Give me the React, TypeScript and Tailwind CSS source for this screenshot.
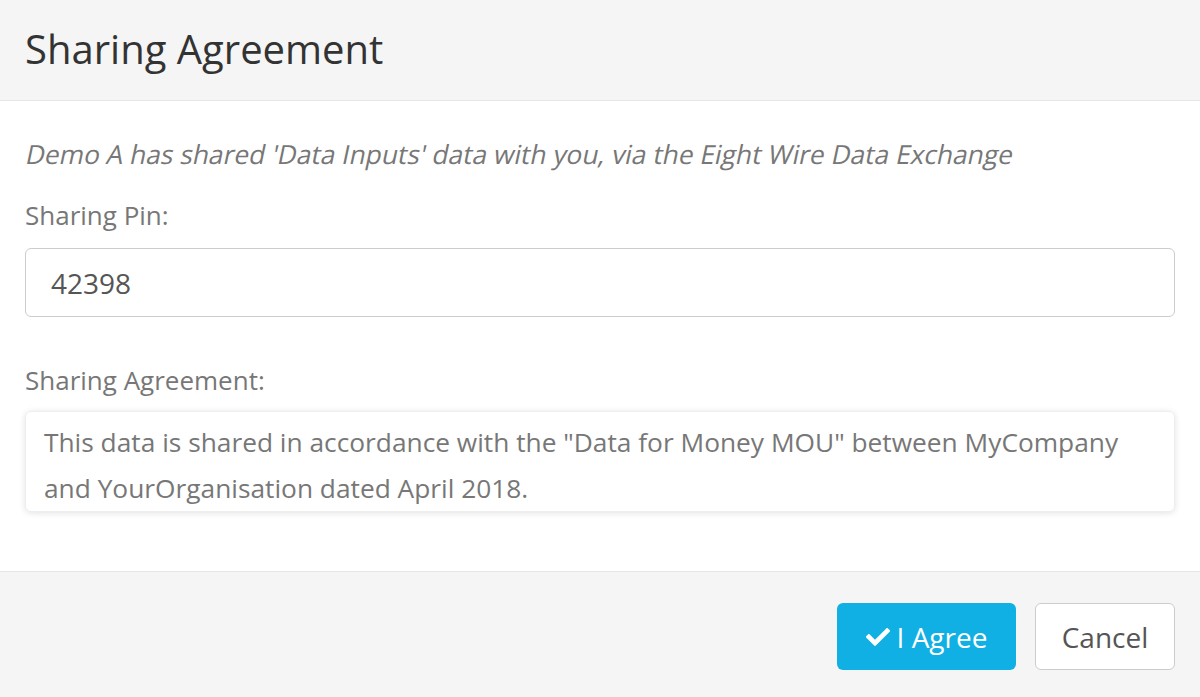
import React from "react";

const font = { fontFamily: '"Open Sans", "Liberation Sans", sans-serif' };

const CheckIcon = () => (
  <svg viewBox="0 0 512 512" className="w-[24px] h-[24px]" fill="currentColor">
    <path d="M173.9 439.4l-166.4-166.4c-10-10-10-26.2 0-36.2l36.2-36.2c10-10 26.2-10 36.2 0L192 312.7 432.1 72.6c10-10 26.2-10 36.2 0l36.2 36.2c10 10 10 26.2 0 36.2l-294.4 294.4c-10 10-26.2 10-36.2 0z" />
  </svg>
);

export default function App() {
  return (
    <div className="w-[1200px] h-[697px] bg-white flex flex-col overflow-hidden" style={font}>
      {/* Header */}
      <div className="h-[101px] shrink-0 bg-[#f5f5f5] border-b border-[#e5e5e5] flex items-center px-[25px]">
        <h1 className="text-[40px] text-[#333] leading-none pb-[2px]">Sharing Agreement</h1>
      </div>

      {/* Body */}
      <div className="flex-1 px-[25px] pt-[36px]">
        <p className="text-[26.3px] leading-[34px] text-[#777]">
          <span className="inline-block -skew-x-12 origin-bottom -ml-[2px]">
            Demo A has shared 'Data Inputs' data with you, via the Eight Wire Data Exchange
          </span>
        </p>
        <label className="block mt-[28px] text-[26px] leading-[32px] text-[#777]">Sharing Pin:</label>
        <div className="mt-[17px] h-[69px] border border-[#ccc] rounded-[6px] flex items-center px-[25px] text-[28px] text-[#555]">
          42398
        </div>
        <label className="block mt-[47px] text-[26px] leading-[32px] text-[#777]">Sharing Agreement:</label>
        <div className="mt-[15px] rounded-[6px] border border-[#eee] shadow-[0_1px_6px_rgba(0,0,0,0.12)] pl-[18px] pr-[24px] pt-[7px] pb-0 text-[26.3px] leading-[46px] text-[#777]">
          This data is shared in accordance with the "Data for Money MOU" between MyCompany and YourOrganisation dated April 2018.
        </div>
      </div>

      {/* Footer */}
      <div className="h-[126px] shrink-0 bg-[#f5f5f5] border-t border-[#e5e5e5] flex justify-end items-start gap-[19px] pt-[31px] px-[25px]">
        <button className="h-[67px] w-[179px] rounded-[6px] bg-[#10b0e4] text-white text-[28px] flex items-center justify-center gap-[7px]">
          <CheckIcon />
          <span>I Agree</span>
        </button>
        <button className="h-[67px] w-[140px] rounded-[6px] bg-white border border-[#ccc] text-[#555] text-[28px] flex items-center justify-center">
          Cancel
        </button>
      </div>
    </div>
  );
}
